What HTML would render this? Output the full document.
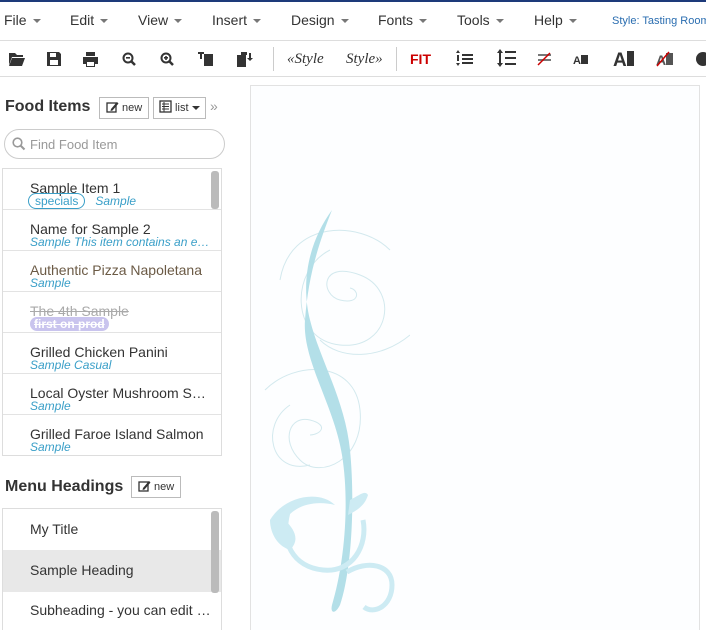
<!DOCTYPE html>
<html><head><style>
*{box-sizing:border-box;margin:0;padding:0}
html,body{width:706px;height:630px;overflow:hidden}
body{background:#fff;font-family:"Liberation Sans",sans-serif;color:#333;position:relative}
.a{position:absolute}
.menu span{position:absolute;top:12px;font-size:14px;color:#333}
.car{display:inline-block;width:0;height:0;border-left:4px solid transparent;border-right:4px solid transparent;border-top:4px solid #777;vertical-align:middle;margin-left:6px}
.row{position:absolute;left:0;width:218px;height:41px;border-bottom:1px solid #e3e3e3}
.row .n{position:absolute;left:27px;top:11px;font-size:14px;color:#333;white-space:nowrap}
.row .s{position:absolute;left:27px;top:25px;font-size:12px;font-style:italic;color:#3a9fc8;white-space:nowrap}
.btn{position:absolute;border:1px solid #bbb;background:#fff;font-size:11px;height:22px;line-height:20px;padding:0 6px;color:#333;white-space:nowrap}
h2{position:absolute;font-family:"Liberation Sans",sans-serif;font-weight:bold;font-size:16px;color:#333;white-space:nowrap}
</style></head><body>
<div class="a" style="left:0;top:0;width:706px;height:2px;background:#1d3a7a"></div>
<div class="menu">
<span style="left:4px">File<i class="car"></i></span>
<span style="left:70px">Edit<i class="car"></i></span>
<span style="left:138px">View<i class="car"></i></span>
<span style="left:212px">Insert<i class="car"></i></span>
<span style="left:291px">Design<i class="car"></i></span>
<span style="left:378px">Fonts<i class="car"></i></span>
<span style="left:457px">Tools<i class="car"></i></span>
<span style="left:534px">Help<i class="car"></i></span>
<span style="left:612px;top:15px;font-size:11px;color:#2a6db0;white-space:nowrap">Style: Tasting Room</span>
</div>
<div class="a" style="left:0;top:40px;width:706px;height:1px;background:#ddd"></div>
<svg class="a" style="left:0;top:41px" width="706" height="36">
<g fill="#333">
<path d="M9 12h6l2 2h6v2H12l-3 8z M12 17h13l-3 8H9z"/>
<path d="M47 11h12l2 2v12H47z" /><rect x="50" y="12" width="6" height="4" fill="#fff"/><rect x="50" y="19" width="8" height="5" fill="#fff"/>
<path d="M86 11h9v4h-9z M83 16h15v7h-3v3h-9v-3h-3z"/><rect x="87" y="21" width="7" height="4" fill="#fff"/>
<circle cx="128" cy="17" r="4.5" fill="none" stroke="#333" stroke-width="2"/><path d="M131 20l4 4" stroke="#333" stroke-width="2.5"/><rect x="126" y="16" width="4" height="1.6"/>
<circle cx="166" cy="17" r="4.5" fill="none" stroke="#333" stroke-width="2"/><path d="M169 20l4 4" stroke="#333" stroke-width="2.5"/><rect x="164" y="16" width="4" height="1.6"/><rect x="165.2" y="15" width="1.6" height="4"/>
<rect x="204" y="13" width="9" height="12"/><rect x="200" y="11" width="2" height="7"/><rect x="198" y="11" width="6" height="2"/>
<rect x="237" y="14" width="9" height="12"/><rect x="241" y="11" width="6" height="3"/><rect x="249" y="12" width="2" height="6"/><path d="M247 17h6l-3 3z"/>
</g>
<rect x="273" y="6" width="1" height="24" fill="#ccc"/>
<text x="287" y="22" font-family="Liberation Serif" font-style="italic" font-size="15" fill="#333">«Style</text>
<text x="346" y="22" font-family="Liberation Serif" font-style="italic" font-size="15" fill="#333">Style»</text>
<rect x="396" y="6" width="1" height="24" fill="#ccc"/>
<text x="410" y="23" font-family="Liberation Sans" font-weight="bold" font-size="14" fill="#c00">FIT</text>
<g fill="#333">
<path d="M456 12l2-3 2 3z M456 22l2 3 2-3z"/><rect x="457" y="14" width="2" height="6"/>
<rect x="462" y="13" width="11" height="2"/><rect x="462" y="17" width="11" height="2"/><rect x="462" y="21" width="11" height="2"/>
<path d="M497 12l3-4 3 4z M497 22l3 4 3-4z"/><rect x="499" y="12" width="2" height="10"/>
<rect x="505" y="10" width="11" height="2"/><rect x="505" y="16" width="11" height="2"/><rect x="505" y="22" width="11" height="2"/>
<rect x="538" y="13" width="13" height="2" fill="#777"/><rect x="538" y="18" width="13" height="2" fill="#777"/><path d="M538 24l12-12" stroke="#c00" stroke-width="1.5"/>
<text x="573" y="23" font-size="11" font-weight="bold">A</text><rect x="581" y="14" width="7" height="9"/>
<text x="613" y="25" font-size="19" font-weight="bold">A</text><rect x="627" y="10" width="7" height="15"/>
<text x="656" y="24" font-size="14" font-weight="bold" fill="#555">A</text><rect x="666" y="12" width="7" height="12" fill="#555"/><path d="M657 25l12-14" stroke="#c00" stroke-width="1.5"/>
<circle cx="703" cy="18" r="7"/>
</g>
</svg>
<div class="a" style="left:0;top:76px;width:706px;height:1px;background:#ddd"></div>

<h2 style="left:5px;top:98px">Food Items</h2>
<div class="btn" style="left:99px;top:97px">
<svg width="13" height="12" style="vertical-align:-2px"><rect x="1" y="2" width="9" height="9" fill="none" stroke="#333" stroke-width="1.3"/><path d="M5 8l6-7 1.5 1.5-6 7-2 .5z" fill="#333"/></svg> new</div>
<div class="btn" style="left:153px;top:97px;padding:0 5px">
<svg width="13" height="13" style="vertical-align:-2px"><rect x="1" y="1" width="11" height="11" fill="none" stroke="#333" stroke-width="1.3"/><path d="M3 4h7M3 6.5h7M3 9h7M5 2v10" stroke="#333" stroke-width="1"/></svg> list<i class="car" style="border-top-color:#333;margin-left:3px"></i></div>
<div class="a" style="left:210px;top:98px;font-size:14px;color:#999">»</div>
<div class="a" style="left:4px;top:129px;width:221px;height:30px;border:1px solid #ccc;border-radius:15px"></div>
<svg class="a" style="left:12px;top:137px" width="14" height="14"><circle cx="5.5" cy="5.5" r="4.3" fill="none" stroke="#999" stroke-width="1.6"/><path d="M8.5 8.5l4 4" stroke="#999" stroke-width="2"/></svg>
<div class="a" style="left:30px;top:137px;font-size:13px;color:#999">Find Food Item</div>

<div class="a" style="left:2px;top:168px;width:220px;height:288px;border:1px solid #ddd;overflow:hidden">
<div class="row" style="top:0"><div class="n">Sample Item 1</div><div class="s" style="left:25px"><span style="border:1px solid #3a9fc8;border-radius:8px;padding:0 6px;font-style:normal">specials</span>&nbsp;&nbsp; Sample</div></div>
<div class="row" style="top:41px"><div class="n">Name for Sample 2</div><div class="s">Sample This item contains an e…</div></div>
<div class="row" style="top:82px"><div class="n" style="color:#6b5a45">Authentic Pizza Napoletana</div><div class="s">Sample</div></div>
<div class="row" style="top:123px"><div class="n" style="color:#aaa;text-decoration:line-through">The 4th Sample</div><div class="s" style="font-style:normal;font-weight:bold;color:#fff;background:#c9c4ee;border-radius:7px;padding:0 4px;text-decoration:line-through">first on prod</div></div>
<div class="row" style="top:164px"><div class="n">Grilled Chicken Panini</div><div class="s">Sample Casual</div></div>
<div class="row" style="top:205px"><div class="n">Local Oyster Mushroom S…</div><div class="s">Sample</div></div>
<div class="row" style="top:246px;border:none"><div class="n">Grilled Faroe Island Salmon</div><div class="s">Sample</div></div>
<div class="a" style="left:208px;top:2px;width:8px;height:38px;background:#bbb;border-radius:3px"></div>
</div>

<h2 style="left:5px;top:478px">Menu Headings</h2>
<div class="btn" style="left:131px;top:476px">
<svg width="13" height="12" style="vertical-align:-2px"><rect x="1" y="2" width="9" height="9" fill="none" stroke="#333" stroke-width="1.3"/><path d="M5 8l6-7 1.5 1.5-6 7-2 .5z" fill="#333"/></svg> new</div>
<div class="a" style="left:2px;top:508px;width:220px;height:130px;border:1px solid #ddd;overflow:hidden">
<div class="a" style="left:27px;top:12px;font-size:14px">My Title</div>
<div class="a" style="left:0;top:41px;width:218px;height:42px;background:#e8e8e8"></div>
<div class="a" style="left:27px;top:53px;font-size:14px">Sample Heading</div>
<div class="a" style="left:27px;top:93px;font-size:14px;white-space:nowrap">Subheading - you can edit …</div>
<div class="a" style="left:208px;top:2px;width:8px;height:82px;background:#bbb;border-radius:3px"></div>
</div>

<div class="a" style="left:250px;top:85px;width:450px;height:560px;border:1px solid #e2e2e2;background:#fdfeff"></div>
<svg class="a" style="left:250px;top:200px" width="160" height="430">
<g fill="none" stroke="#d3e9ee" stroke-width="1">
<path d="M80 50c-40 20-40 90 10 95s60-55 20-70-40 20-20 25 20-10 10-12"/>
<path d="M30 80c10-60 80-60 110-30M70 140c20 20 60 20 90-5"/>
<path d="M15 190c30-30 90-30 95 20s-40 70-60 50-10-45 10-40 10 15 0 15"/>
<path d="M40 205c-30 20-20 70 20 60"/>
</g>
<path d="M82 10C60 40 50 80 60 120s35 80 40 130 2 120-10 155c-5 10-10 8-8 0 12-40 18-100 10-150S52 160 55 120 66 50 82 10z" fill="#b3dfe8"/>
<g fill="#cdebf3">
<path d="M20 320c15-25 50-30 65-15-20-5-40 0-50 15 10 10 15 20 5 30-15-5-20-20-20-30z"/>
<path d="M100 300c10-5 15-10 18-5-3 10-10 15-20 20z"/>
</g>
<g fill="none" stroke="#cdebf3" stroke-width="5">
<path d="M38 312c-8 30 5 55 35 58s45-25 40-50"/>
<path d="M97 372c20-12 45-8 45 13s-18 30-28 22"/>
</g>
</svg>
</body></html>
